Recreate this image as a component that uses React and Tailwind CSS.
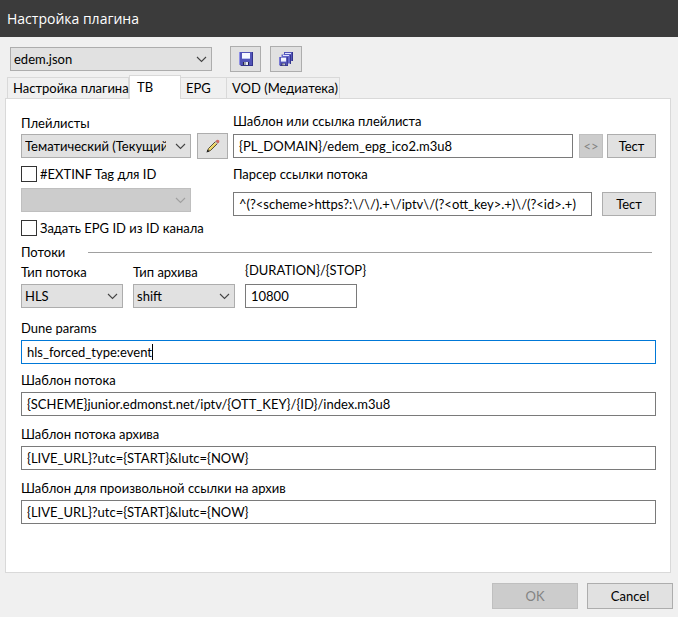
import { useState } from 'react';
import clsx from 'clsx';

const TABS = [
  { id: 'plugin', label: 'Настройка плагина', width: 'w-[122px]' },
  { id: 'tv', label: 'ТВ', width: 'w-[52px]' },
  { id: 'epg', label: 'EPG', width: 'w-[46px]' },
  { id: 'vod', label: 'VOD (Медиатека)', width: 'w-[113px]' },
];

function Select({ className, options, disabled, ...props }) {
  return (
    <div className={clsx('relative h-6', className)}>
      <select
        disabled={disabled}
        className={clsx(
          'block h-6 w-full appearance-none border pl-[3px] pr-6 outline-none',
          disabled ? 'border-[#bfbfbf] bg-[#cccccc]' : 'border-[#adadad] bg-[#e1e1e1]'
        )}
        {...props}
      >
        {options.map((o) => (
          <option key={o}>{o}</option>
        ))}
      </select>
      <svg
        className={clsx(
          'pointer-events-none absolute right-[5px] top-[9px]',
          disabled ? 'text-[#a0a0a0]' : 'text-[#444444]'
        )}
        width="11"
        height="7"
        viewBox="0 0 11 7"
        fill="none"
        stroke="currentColor"
        strokeWidth="1.1"
      >
        <path d="M1 1l4.5 4.5L10 1" />
      </svg>
    </div>
  );
}

function TextInput({ className, ...props }) {
  return (
    <input
      type="text"
      className={clsx(
        'block h-6 min-w-0 border border-[#7a7a7a] bg-white px-[5px] outline-none focus:border-[#0078d7]',
        className
      )}
      {...props}
    />
  );
}

function Button({ className, ...props }) {
  return (
    <button
      type="button"
      className={clsx(
        'flex shrink-0 items-center justify-center border border-[#adadad] bg-[#e1e1e1] disabled:border-[#bfbfbf] disabled:bg-[#cccccc] disabled:text-[#838383]',
        className
      )}
      {...props}
    />
  );
}

function Field({ id, label, className, ...props }) {
  return (
    <div className={className}>
      <label htmlFor={id} className="block h-5 leading-4">
        {label}
      </label>
      <TextInput id={id} className="w-full" {...props} />
    </div>
  );
}

// the native caret is hidden, this one follows the typed text
function CaretField({ id, label, className, initial }) {
  const [value, setValue] = useState(initial);

  return (
    <div className={className}>
      <label htmlFor={id} className="block h-5 leading-4">
        {label}
      </label>
      <div className="relative">
        <TextInput
          id={id}
          className="peer w-full caret-transparent"
          value={value}
          onChange={(e) => setValue(e.target.value)}
          autoFocus
        />
        <div
          aria-hidden="true"
          className="pointer-events-none absolute inset-y-1 left-[6px] hidden border-r border-black peer-focus:block"
        >
          <span className="invisible whitespace-pre">{value}</span>
        </div>
      </div>
    </div>
  );
}

function Floppy() {
  return (
    <g>
      <path d="M0 0h14v14H2l-2-2z" fill="#5254b8" />
      <path d="M0 0h1v12H0z" fill="#8d8fe6" />
      <path d="M13 0h1v14h-1zM2 13h12v1H2z" fill="#33348c" />
      <path d="M3 1h8v6H3z" fill="#f6f8ff" />
      <path d="M3 6h8v1H3z" fill="#b9c3ee" />
      <path d="M4 10h6v3H4z" fill="#26264a" />
      <path d="M5 10h2v3H5z" fill="#9ea4b0" />
      <path d="M7 10h2v3H7z" fill="#e9edf2" />
    </g>
  );
}

function SaveIcon() {
  return (
    <svg width="14" height="14" viewBox="0 0 14 14">
      <Floppy />
    </svg>
  );
}

function SaveAllIcon() {
  return (
    <svg width="14" height="14" viewBox="0 0 14 14">
      <path d="M5 0h9v9H5z" fill="#5254b8" />
      <path d="M6 1h6v1H6z" fill="#dfe4ff" />
      <path d="M2.500 2.500h9v9h-9z" fill="#6365c8" />
      <path d="M4 3h6v1H4z" fill="#dfe4ff" />
      <path d="M11 3h1v9h-1zM13 0h1v9h-1z" fill="#33348c" />
      <g transform="translate(0 5) scale(.643)">
        <Floppy />
      </g>
    </svg>
  );
}

function PencilIcon() {
  return (
    <svg width="14" height="14" viewBox="0 0 14 14">
      <path d="M1.500 12.500l1-3 7-7 2 2-7 7z" fill="#e9d060" stroke="#4a4028" strokeWidth=".9" />
      <path d="M3.300 9.800l6.500-6.500" stroke="#fff0a0" strokeWidth=".6" />
      <path d="M9.300 2.500l1.400-1.400q1.200-.8 2.200.1t.1 2.200l-1.500 1.400z" fill="#cf6a62" />
      <path d="M8.800 3l.8-.8 2.300 2.300-.8.800z" fill="#b9bcc0" />
      <path d="M.5 13.500l.9-3 2.100 2.100z" fill="#222222" />
    </svg>
  );
}

export default function App() {
  const [tab, setTab] = useState('tv');
  const [extinfTag, setExtinfTag] = useState(false);
  const [epgId, setEpgId] = useState(false);

  return (
    <div className="flex min-h-screen flex-col bg-[#f0f0f0] font-['Lato','Noto_Sans',sans-serif] text-[13px] leading-4 text-black">
      {/* TITLE BAR */}
      <header className="flex h-[37px] items-center bg-[#3b3b3b] px-[7px]">
        <h1 className="font-['Open_Sans','Noto_Sans',sans-serif] text-[14px] text-white">
          Настройка плагина
        </h1>
      </header>

      {/* TOOLBAR */}
      <div className="mt-[9px] flex items-center px-[10px]">
        <Select className="w-[202px]" options={['edem.json']} aria-label="Конфигурация" />
        <Button className="ml-[18px] h-[26px] w-[31px]" aria-label="Сохранить">
          <SaveIcon />
        </Button>
        <Button className="ml-[9px] h-[26px] w-8" aria-label="Сохранить все">
          <SaveAllIcon />
        </Button>
      </div>

      {/* TABS */}
      <div role="tablist" className="mt-[3px] flex h-[23px] items-end pl-[7px]">
        {TABS.map((t) => (
          <button
            key={t.id}
            type="button"
            role="tab"
            aria-selected={tab === t.id}
            onClick={() => setTab(t.id)}
            className={clsx(
              'whitespace-nowrap border border-[#d9d9d9] px-[5px] text-left',
              t.width,
              tab === t.id
                ? 'relative -mb-px h-6 border-b-0 bg-white px-[7px] pb-[2px]'
                : 'h-[21px] border-b-0 border-l-0 bg-[#f0f0f0] first:border-l'
            )}
          >
            {t.label}
          </button>
        ))}
      </div>

      {/* PANEL */}
      <main className="ml-[5px] mr-[7px] border border-[#d9d9d9] bg-white pb-12 pl-[15px] pr-[14px] pt-[14px]">
        <div className="grid grid-cols-[207px_1fr] gap-x-[5px]">
          <div>
            <label htmlFor="playlist" className="block h-5 leading-5">
              Плейлисты
            </label>
            <div className="flex h-[26px] items-center justify-between">
              <Select id="playlist" className="w-[170px]" options={['Тематический (Текущий)']} />
              <Button className="h-[26px] w-[31px]" aria-label="Изменить">
                <PencilIcon />
              </Button>
            </div>
            <label className="mt-[7px] flex h-4 items-center gap-[3px]">
              <input
                type="checkbox"
                checked={extinfTag}
                onChange={(e) => setExtinfTag(e.target.checked)}
                className="size-4 appearance-none border border-[#333333] bg-white checked:bg-[#333333]"
              />
              #EXTINF Tag для ID
            </label>
            <Select
              className="mt-[6px] w-[170px]"
              options={['']}
              disabled={!extinfTag}
              aria-label="Tag для ID"
            />
            <label className="mt-2 flex h-4 items-center gap-[3px]">
              <input
                type="checkbox"
                checked={epgId}
                onChange={(e) => setEpgId(e.target.checked)}
                className="size-4 appearance-none border border-[#333333] bg-white checked:bg-[#333333]"
              />
              Задать EPG ID из ID канала
            </label>
          </div>

          <div>
            <label htmlFor="template" className="block h-5 leading-4">
              Шаблон или ссылка плейлиста
            </label>
            <div className="flex h-[26px] items-center">
              <TextInput id="template" className="flex-1" defaultValue="{PL_DOMAIN}/edem_epg_ico2.m3u8" />
              <Button className="ml-[6px] h-6 w-6" disabled>
                &lt;&gt;
              </Button>
              <Button className="ml-1 h-6 w-[49px]">Тест</Button>
            </div>
            <label htmlFor="parser" className="mt-[7px] block h-4">
              Парсер ссылки потока
            </label>
            <div className="mt-[9px] flex h-[26px] items-center">
              <TextInput
                id="parser"
                className="flex-1"
                defaultValue="^(?<scheme>https?:\/\/).+\/iptv\/(?<ott_key>.+)\/(?<id>.+)"
              />
              <Button className="ml-[10px] h-6 w-[54px]">Тест</Button>
            </div>
          </div>
        </div>

        {/* STREAMS */}
        <div className="mt-2 flex h-4 items-center pr-1">
          <h2 className="w-[67px]">Потоки</h2>
          <hr className="flex-1 border-[#a0a0a0]" />
        </div>
        <div className="mt-1 flex gap-[10px]">
          <div className="w-[102px]">
            <label htmlFor="stream-type" className="block h-5 leading-4">
              Тип потока
            </label>
            <Select id="stream-type" options={['HLS', 'MPEG-TS']} />
          </div>
          <div className="w-[102px]">
            <label htmlFor="archive-type" className="block h-5 leading-4">
              Тип архива
            </label>
            <Select id="archive-type" options={['shift', 'append', 'flussonic']} />
          </div>
          <div className="w-[112px]">
            <label htmlFor="duration" className="block h-5 leading-3">
              {'{DURATION}/{STOP}'}
            </label>
            <TextInput id="duration" className="w-full" defaultValue="10800" />
          </div>
        </div>

        <CaretField id="dune" className="mt-3" label="Dune params" initial="hls_forced_type:event" />
        <Field
          id="stream"
          className="mt-2"
          label="Шаблон потока"
          defaultValue="{SCHEME}junior.edmonst.net/iptv/{OTT_KEY}/{ID}/index.m3u8"
        />
        <Field
          id="archive"
          className="mt-[10px]"
          label="Шаблон потока архива"
          defaultValue="{LIVE_URL}?utc={START}&lutc={NOW}"
        />
        <Field
          id="custom-archive"
          className="mt-[10px]"
          label="Шаблон для произвольной ссылки на архив"
          defaultValue="{LIVE_URL}?utc={START}&lutc={NOW}"
        />
      </main>

      {/* ACTIONS */}
      <footer className="mt-[10px] flex justify-end gap-[9px] pb-2 pr-[5px]">
        <Button className="h-[26px] w-[86px]" disabled>
          OK
        </Button>
        <Button className="h-[26px] w-[86px]">Cancel</Button>
      </footer>
    </div>
  );
}
